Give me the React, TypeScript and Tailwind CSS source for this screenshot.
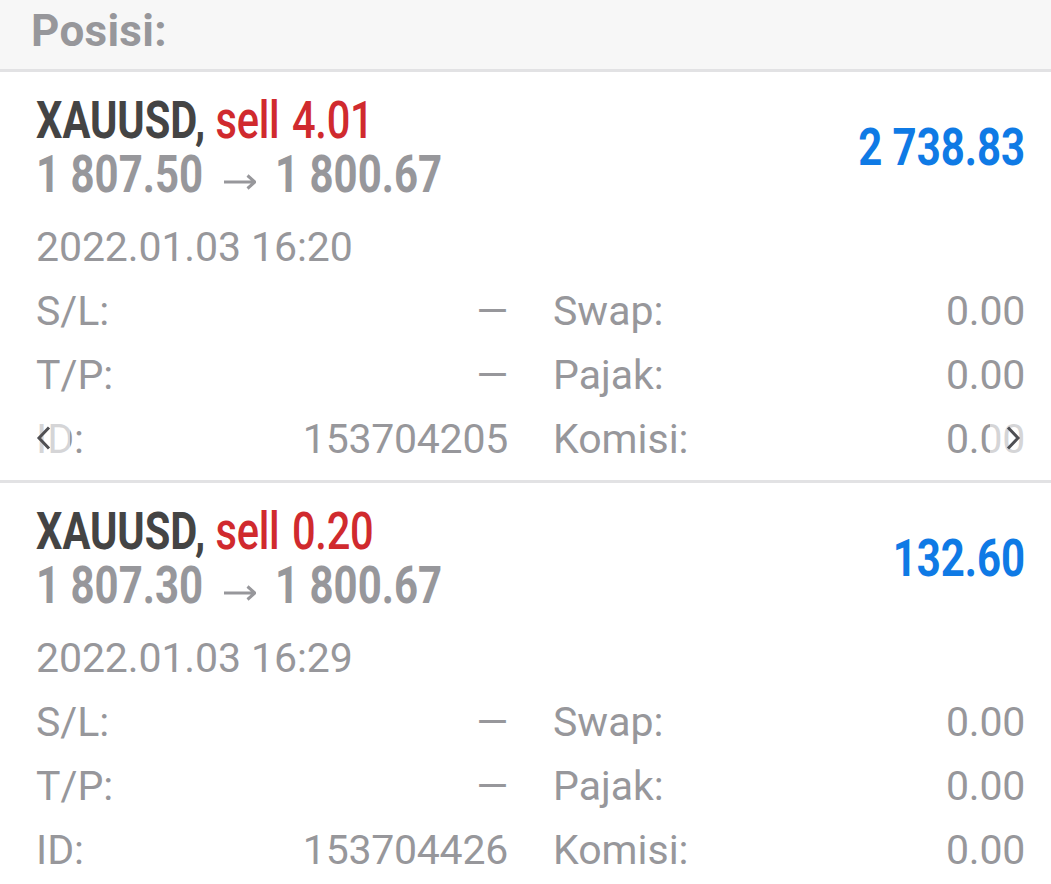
interface Position {
  id: string;
  symbol: string;
  volume: string;
  open: string;
  current: string;
  time: string;
  profit: string;
}

const POSITIONS: Position[] = [
  { id: "153704205", symbol: "XAUUSD", volume: "4.01", open: "1 807.50", current: "1 800.67", time: "2022.01.03 16:20", profit: "2 738.83" },
  { id: "153704426", symbol: "XAUUSD", volume: "0.20", open: "1 807.30", current: "1 800.67", time: "2022.01.03 16:29", profit: "132.60" },
];

function Detail({ label, value }: { label: string; value: string }) {
  return (
    <div className="flex items-center justify-between">
      <span>{label}</span>
      <span className="tracking-[-0.25px]">{value}</span>
    </div>
  );
}

function Arrow() {
  return (
    <svg className="mr-[19px] ml-[22px] mt-[13px] h-5 w-8" viewBox="0 0 32 20" fill="none" stroke="currentColor" strokeWidth="3">
      <path d="M0 10H30M23.5 3.5L31 10L23.5 16.5" />
    </svg>
  );
}

function PositionCard({ position }: { position: Position }) {
  return (
    <section className="h-[411px] border-b-3 border-[#e2e2e4] pt-[22px] pr-[26px] pl-9">
      <div className="flex justify-between">
        <div className="text-[51px] leading-[54px] whitespace-nowrap">
          <div className="h-[54px] w-[415px] origin-left scale-x-[0.815]">
            <span className="font-bold text-[#444]">{position.symbol},</span>{" "}
            <span className="font-medium tracking-[-0.3px] text-[#d02a2e] [word-spacing:3px]">sell {position.volume}</span>
          </div>
          <div className="flex h-[54px] items-center font-bold text-[#97979b]">
            <span className="w-[166px]">
              <span className="inline-block origin-left scale-x-[0.823]">{position.open}</span>
            </span>
            <Arrow />
            <span className="inline-block origin-left scale-x-[0.823]">{position.current}</span>
          </div>
        </div>
        <div className="mt-[27px] h-[54px] origin-right scale-x-[0.822] text-[51px] leading-[54px] font-bold whitespace-nowrap text-[#0f7ae5]">{position.profit}</div>
      </div>
      <div className="mt-[13px] text-[41px] leading-[64px] text-[#97979b]">
        <div className="tracking-[-0.1px]">{position.time}</div>
        <div className="grid grid-cols-[472px_472px] gap-x-[45px]">
          <Detail label="S/L:" value="—" />
          <Detail label="Swap:" value="0.00" />
          <Detail label="T/P:" value="—" />
          <Detail label="Pajak:" value="0.00" />
          <Detail label="ID:" value={position.id} />
          <Detail label="Komisi:" value="0.00" />
        </div>
      </div>
    </section>
  );
}

export default function App() {
  return (
    <main className="relative h-[884px] w-[1051px] overflow-hidden bg-white font-[Roboto,sans-serif]">
      <header className="h-[72px] border-b-3 border-[#e2e2e4] bg-[#f7f7f7] pl-[31px] text-[44px] leading-[62px] font-bold tracking-[0.3px] text-[#97979b]">Posisi:</header>
      {POSITIONS.map((p) => (
        <PositionCard key={p.id} position={p} />
      ))}
      {/* carousel controls float over the last row of the first card */}
      <button className="absolute top-[408px] left-0 flex h-[60px] w-[70px] items-center bg-white/60 pl-[36px]">
        <svg className="h-6 w-4" viewBox="0 0 16 24" fill="none" stroke="#505054" strokeWidth="3">
          <path d="M13 1.5L3 12L13 22.5" />
        </svg>
      </button>
      <button className="absolute top-[408px] right-0 flex h-[60px] w-[61px] items-center bg-white/60 pl-[15px]">
        <svg className="h-6 w-4" viewBox="0 0 16 24" fill="none" stroke="#505054" strokeWidth="3">
          <path d="M3 1.5L13 12L3 22.5" />
        </svg>
      </button>
    </main>
  );
}
